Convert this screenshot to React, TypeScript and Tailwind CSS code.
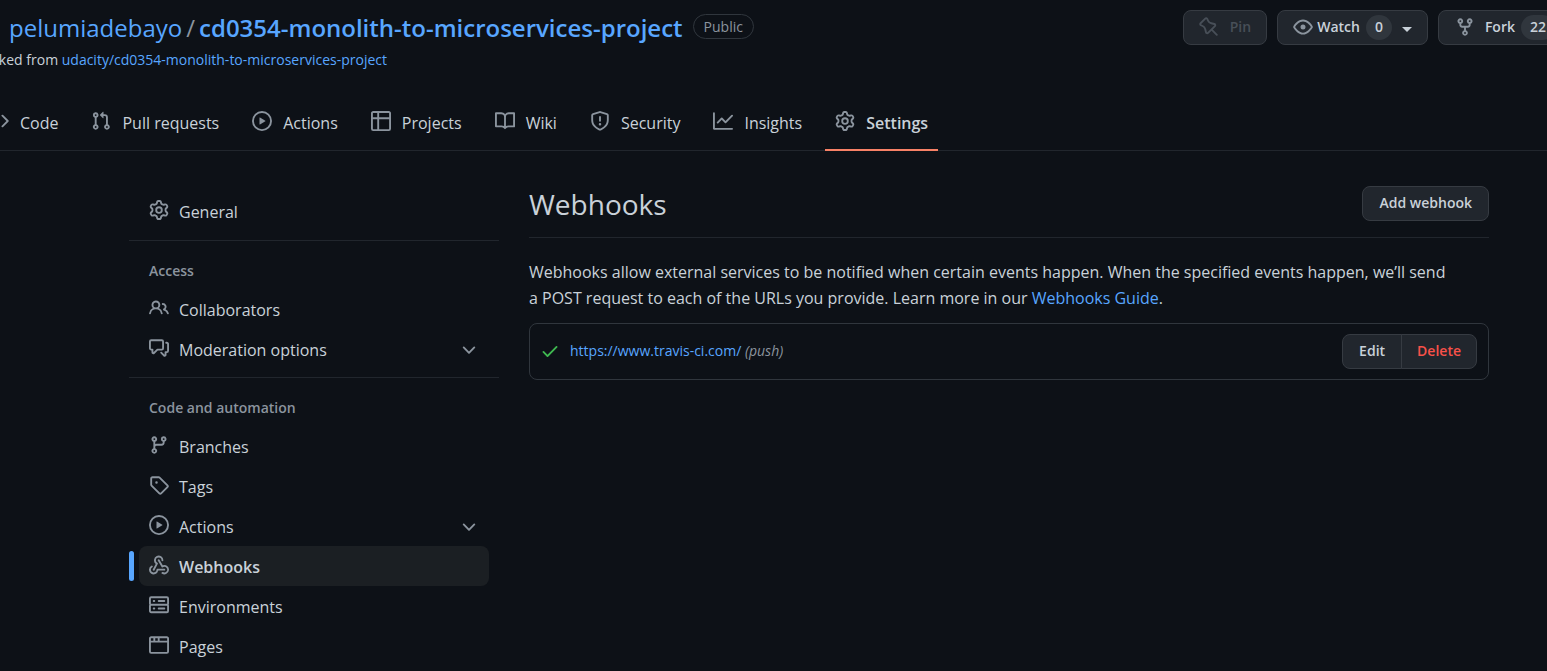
import React from "react";

const icons = {
  code: "M4.72 3.22a.75.75 0 011.06 1.06L2.06 8l3.72 3.72a.75.75 0 11-1.06 1.06L.47 8.53a.75.75 0 010-1.06l4.25-4.25zm6.56 0a.75.75 0 10-1.06 1.06L13.94 8l-3.72 3.72a.75.75 0 101.06 1.06l4.25-4.25a.75.75 0 000-1.06l-4.25-4.25z",
  pullRequest:
    "M7.177 3.073L9.573.677A.25.25 0 0110 .854v4.792a.25.25 0 01-.427.177L7.177 3.427a.25.25 0 010-.354zM3.75 2.5a.75.75 0 100 1.5.75.75 0 000-1.5zm-2.25.75a2.25 2.25 0 113 2.122v5.256a2.251 2.251 0 11-1.5 0V5.372A2.25 2.25 0 011.5 3.25zM11 2.5h-1V4h1a1 1 0 011 1v5.628a2.251 2.251 0 101.5 0V5A2.5 2.5 0 0011 2.5zm1 10.25a.75.75 0 111.5 0 .75.75 0 01-1.5 0zM3.75 12a.75.75 0 100 1.5.75.75 0 000-1.5z",
  play: "M1.5 8a6.5 6.5 0 1113 0 6.5 6.5 0 01-13 0zM8 0a8 8 0 100 16A8 8 0 008 0zM6.379 5.227A.25.25 0 006 5.442v5.117a.25.25 0 00.379.214l4.264-2.559a.25.25 0 000-.428L6.379 5.227z",
  table:
    "M0 1.75C0 .784.784 0 1.75 0h12.5C15.216 0 16 .784 16 1.75v12.5A1.75 1.75 0 0114.25 16H1.75A1.75 1.75 0 010 14.25V1.75zM1.5 6.5v7.75c0 .138.112.25.25.25H5v-8H1.5zM5 5H1.5V1.75a.25.25 0 01.25-.25H5V5zm1.5 1.5v8h7.75a.25.25 0 00.25-.25V6.5h-8zm8-1.5h-8V1.5h7.75a.25.25 0 01.25.25V5z",
  book: "M0 1.75A.75.75 0 01.75 1h4.253c1.227 0 2.317.59 3 1.501A3.744 3.744 0 0111.006 1h4.245a.75.75 0 01.75.75v10.5a.75.75 0 01-.75.75h-4.507a2.25 2.25 0 00-1.591.659l-.622.621a.75.75 0 01-1.06 0l-.622-.621A2.25 2.25 0 005.258 13H.75a.75.75 0 01-.75-.75V1.75zm8.755 3a2.25 2.25 0 012.25-2.25H14.5v9h-3.757c-.71 0-1.4.201-1.992.572l.004-7.322zm-1.504 7.324l.004-5.073-.002-2.253A2.25 2.25 0 005.003 2.5H1.5v9h3.757a3.75 3.75 0 011.994.574z",
  shield:
    "M7.467.133a1.75 1.75 0 011.066 0l5.25 1.68A1.75 1.75 0 0115 3.48V7c0 1.566-.32 3.182-1.303 4.682-.983 1.498-2.585 2.813-5.032 3.855a1.7 1.7 0 01-1.33 0c-2.447-1.042-4.049-2.357-5.032-3.855C1.32 10.182 1 8.566 1 7V3.48a1.75 1.75 0 011.217-1.667l5.25-1.68zm.61 1.429a.25.25 0 00-.153 0l-5.25 1.68a.25.25 0 00-.174.238V7c0 1.358.275 2.666 1.057 3.86.784 1.194 2.121 2.34 4.366 3.297a.2.2 0 00.154 0c2.245-.956 3.582-2.104 4.366-3.298C13.225 9.666 13.5 8.36 13.5 7V3.48a.25.25 0 00-.174-.237l-5.25-1.68zM9 10.5a1 1 0 11-2 0 1 1 0 012 0zm-.25-5.75a.75.75 0 10-1.5 0v3a.75.75 0 001.5 0v-3z",
  graph:
    "M1.5 1.75a.75.75 0 00-1.5 0v12.5c0 .414.336.75.75.75h14.5a.75.75 0 000-1.5H1.5V1.75zm14.28 2.53a.75.75 0 00-1.06-1.06L10 7.94 7.53 5.47a.75.75 0 00-1.06 0L3.22 8.72a.75.75 0 001.06 1.06L7 7.06l2.47 2.47a.75.75 0 001.06 0l5.25-5.25z",
  gear: "M7.429 1.525a6.593 6.593 0 011.142 0c.036.003.108.036.137.146l.289 1.105c.147.56.55.967.997 1.189.174.086.341.183.501.29.417.278.97.423 1.53.27l1.102-.303c.11-.03.175.016.195.046.219.31.41.641.573.989.014.031.022.11-.059.19l-.815.806c-.411.406-.562.957-.53 1.456a4.588 4.588 0 010 .582c-.032.499.119 1.05.53 1.456l.815.806c.08.08.073.159.059.19a6.494 6.494 0 01-.573.99c-.02.029-.086.074-.195.045l-1.103-.303c-.559-.153-1.112-.008-1.529.27-.16.107-.327.204-.5.29-.449.222-.851.628-.998 1.189l-.289 1.105c-.029.11-.101.143-.137.146a6.613 6.613 0 01-1.142 0c-.036-.003-.108-.037-.137-.146l-.289-1.105c-.147-.56-.55-.967-.997-1.189a4.502 4.502 0 01-.501-.29c-.417-.278-.97-.423-1.53-.27l-1.102.303c-.11.03-.175-.016-.195-.046a6.492 6.492 0 01-.573-.989c-.014-.031-.022-.11.059-.19l.815-.806c.411-.406.562-.957.53-1.456a4.587 4.587 0 010-.582c.032-.499-.119-1.05-.53-1.456l-.815-.806c-.08-.08-.073-.159-.059-.19a6.44 6.44 0 01.573-.99c.02-.029.086-.075.195-.045l1.103.303c.559.153 1.112.008 1.529-.27.16-.107.327-.204.5-.29.449-.222.851-.628.998-1.189l.289-1.105c.029-.11.101-.143.137-.146zM8 0c-.236 0-.47.01-.701.03-.743.065-1.29.615-1.458 1.261l-.29 1.106c-.017.066-.078.158-.211.224a5.994 5.994 0 00-.668.386c-.123.082-.233.09-.3.071L3.27 2.776c-.644-.177-1.392.02-1.82.63a7.977 7.977 0 00-.704 1.217c-.315.675-.111 1.422.363 1.891l.815.806c.05.048.098.147.088.294a6.084 6.084 0 000 .772c.01.147-.038.246-.088.294l-.815.806c-.474.469-.678 1.216-.363 1.891.2.428.436.835.704 1.218.428.609 1.176.806 1.82.63l1.103-.303c.066-.019.176-.011.299.071.213.143.436.272.668.386.133.066.194.158.212.224l.289 1.106c.169.646.715 1.196 1.458 1.26a8.094 8.094 0 001.402 0c.743-.064 1.29-.614 1.458-1.26l.29-1.106c.017-.066.078-.158.211-.224a5.98 5.98 0 00.668-.386c.123-.082.233-.09.3-.071l1.102.302c.644.177 1.392-.02 1.82-.63.268-.382.505-.789.704-1.217.315-.675.111-1.422-.364-1.891l-.814-.806c-.05-.048-.098-.147-.088-.294a6.1 6.1 0 000-.772c-.01-.147.039-.246.088-.294l.814-.806c.475-.469.679-1.216.364-1.891a7.992 7.992 0 00-.704-1.218c-.428-.609-1.176-.806-1.82-.63l-1.103.303c-.066.019-.176.011-.299-.071a5.991 5.991 0 00-.668-.386c-.133-.066-.194-.158-.212-.224L10.16 1.29C9.99.645 9.444.095 8.701.031A8.094 8.094 0 008 0zm1.5 8a1.5 1.5 0 11-3 0 1.5 1.5 0 013 0zM11 8a3 3 0 11-6 0 3 3 0 016 0z",
  people:
    "M5.5 3.5a2 2 0 100 4 2 2 0 000-4zM2 5.5a3.5 3.5 0 115.898 2.549 5.507 5.507 0 013.034 4.084.75.75 0 11-1.482.235 4.001 4.001 0 00-7.9 0 .75.75 0 01-1.482-.236A5.507 5.507 0 013.102 8.05 3.49 3.49 0 012 5.5zM11 4a.75.75 0 100 1.5 1.5 1.5 0 01.666 2.844.75.75 0 00-.416.672v.352a.75.75 0 00.574.73c1.2.289 2.162 1.2 2.522 2.372a.75.75 0 101.434-.44 5.01 5.01 0 00-2.56-3.012A3 3 0 0011 4z",
  discussion:
    "M1.5 2.75a.25.25 0 01.25-.25h8.5a.25.25 0 01.25.25v5.5a.25.25 0 01-.25.25h-3.5a.75.75 0 00-.53.22L3.5 11.44V9.25a.75.75 0 00-.75-.75h-1a.25.25 0 01-.25-.25v-5.5zM1.75 1A1.75 1.75 0 000 2.75v5.5C0 9.216.784 10 1.75 10H2v1.543a1.457 1.457 0 002.487 1.03L7.061 10h3.189A1.75 1.75 0 0012 8.25v-5.5A1.75 1.75 0 0010.25 1h-8.5zM14.5 4.75a.25.25 0 00-.25-.25h-.5a.75.75 0 110-1.5h.5c.966 0 1.75.784 1.75 1.75v5.5A1.75 1.75 0 0114.25 12H14v1.543a1.457 1.457 0 01-2.487 1.03L9.22 12.28a.75.75 0 111.06-1.06l2.22 2.22v-2.19a.75.75 0 01.75-.75h1a.25.25 0 00.25-.25v-5.5z",
  branch:
    "M11.75 2.5a.75.75 0 100 1.5.75.75 0 000-1.5zm-2.25.75a2.25 2.25 0 113 2.122V6A2.5 2.5 0 0110 8.5H6a1 1 0 00-1 1v1.128a2.251 2.251 0 11-1.5 0V5.372a2.25 2.25 0 111.5 0v1.836A2.492 2.492 0 016 7h4a1 1 0 001-1v-.628A2.25 2.25 0 019.5 3.25zM4.25 12a.75.75 0 100 1.5.75.75 0 000-1.5zM3.5 3.25a.75.75 0 111.5 0 .75.75 0 01-1.5 0z",
  tag: "M2.5 7.775V2.75a.25.25 0 01.25-.25h5.025a.25.25 0 01.177.073l6.25 6.25a.25.25 0 010 .354l-5.025 5.025a.25.25 0 01-.354 0l-6.25-6.25a.25.25 0 01-.073-.177zm-1.5 0V2.75C1 1.784 1.784 1 2.75 1h5.025c.464 0 .91.184 1.238.513l6.25 6.25a1.75 1.75 0 010 2.474l-5.026 5.026a1.75 1.75 0 01-2.474 0l-6.25-6.25A1.75 1.75 0 011 7.775zM6 5a1 1 0 100 2 1 1 0 000-2z",
  webhook:
    "M5.5 4.25a2.25 2.25 0 014.5 0 .75.75 0 001.5 0 3.75 3.75 0 10-6.14 2.889l-2.272 4.258a.75.75 0 001.324.706L7 7.25a.75.75 0 00-.309-1.015A2.25 2.25 0 015.5 4.25zM7.364 3.607a.75.75 0 011.03.257l2.608 4.349a3.75 3.75 0 11-.628 6.785.75.75 0 01.752-1.299 2.25 2.25 0 10-.033-3.88.75.75 0 01-1.03-.256L7.107 4.636a.75.75 0 01.257-1.03zM2.9 8.776A.75.75 0 012.625 9.8 2.25 2.25 0 106 11.75a.75.75 0 01.75-.751h5.5a.75.75 0 010 1.5H7.425a3.751 3.751 0 11-5.55-3.998.75.75 0 011.024.274z",
  server:
    "M1.75 1A1.75 1.75 0 000 2.75v4c0 .372.116.717.314 1a1.742 1.742 0 00-.314 1v4c0 .966.784 1.75 1.75 1.75h12.5A1.75 1.75 0 0016 12.75v-4c0-.372-.116-.717-.314-1 .198-.283.314-.628.314-1v-4A1.75 1.75 0 0014.25 1H1.75zm0 7.5a.25.25 0 00-.25.25v4c0 .138.112.25.25.25h12.5a.25.25 0 00.25-.25v-4a.25.25 0 00-.25-.25H1.75zM1.5 2.75a.25.25 0 01.25-.25h12.5a.25.25 0 01.25.25v4a.25.25 0 01-.25.25H1.75a.25.25 0 01-.25-.25v-4zm5.5 2A.75.75 0 017.75 4h4.5a.75.75 0 010 1.5h-4.5A.75.75 0 017 4.75zM7.75 10a.75.75 0 000 1.5h4.5a.75.75 0 000-1.5h-4.5zM3 4.75A.75.75 0 013.75 4h.5a.75.75 0 010 1.5h-.5A.75.75 0 013 4.75zM3.75 10a.75.75 0 000 1.5h.5a.75.75 0 000-1.5h-.5z",
  browser:
    "M0 2.75C0 1.784.784 1 1.75 1h12.5c.966 0 1.75.784 1.75 1.75v10.5A1.75 1.75 0 0114.25 15H1.75A1.75 1.75 0 010 13.25V2.75zm1.75-.25a.25.25 0 00-.25.25V4.5h2v-2H1.75zM5 2.5v2h2v-2H5zm3.5 0v2h6V2.75a.25.25 0 00-.25-.25H8.5zm6 3.5h-13v7.25c0 .138.112.25.25.25h12.5a.25.25 0 00.25-.25V6z",
  pin: "M4.456.734a1.75 1.75 0 012.826.504l.613 1.327a3.081 3.081 0 002.084 1.707l2.454.584c1.332.317 1.8 1.972.832 2.94L11.06 10l3.72 3.72a.75.75 0 11-1.061 1.06L10 11.06l-2.204 2.205c-.968.968-2.623.5-2.94-.832l-.584-2.454a3.081 3.081 0 00-1.707-2.084l-1.327-.613a1.75 1.75 0 01-.504-2.826L4.456.734zM5.92 1.866a.25.25 0 00-.404-.072L1.794 5.516a.25.25 0 00.072.404l1.328.613A4.582 4.582 0 015.73 9.63l.584 2.454a.25.25 0 00.42.12l5.47-5.47a.25.25 0 00-.12-.42L9.63 5.73a4.581 4.581 0 01-3.098-2.537L5.92 1.866z",
  eye: "M1.679 7.932c.412-.621 1.242-1.75 2.366-2.717C5.175 4.242 6.527 3.5 8 3.5c1.473 0 2.824.742 3.955 1.715 1.124.967 1.954 2.096 2.366 2.717a.119.119 0 010 .136c-.412.621-1.242 1.75-2.366 2.717C10.825 11.758 9.473 12.5 8 12.5c-1.473 0-2.824-.742-3.955-1.715C2.92 9.818 2.09 8.69 1.679 8.068a.119.119 0 010-.136zM8 2c-1.981 0-3.67.992-4.933 2.078C1.797 5.169.88 6.423.43 7.1a1.619 1.619 0 000 1.798c.45.678 1.367 1.932 2.637 3.024C4.329 13.008 6.019 14 8 14c1.981 0 3.67-.992 4.933-2.078 1.27-1.091 2.187-2.345 2.637-3.023a1.619 1.619 0 000-1.798c-.45-.678-1.367-1.932-2.637-3.023C11.671 2.992 9.981 2 8 2zm0 8a2 2 0 100-4 2 2 0 000 4z",
  fork: "M5 3.25a.75.75 0 11-1.5 0 .75.75 0 011.5 0zm0 2.122a2.25 2.25 0 10-1.5 0v.878A2.25 2.25 0 005.75 8.5h1.5v2.128a2.251 2.251 0 101.5 0V8.5h1.5a2.25 2.25 0 002.25-2.25v-.878a2.25 2.25 0 10-1.5 0v.878a.75.75 0 01-.75.75h-4.5A.75.75 0 015 6.25v-.878zm3.75 7.378a.75.75 0 11-1.5 0 .75.75 0 011.5 0zm3-8.75a.75.75 0 100-1.5.75.75 0 000 1.5z",
  check: "M13.78 4.22a.75.75 0 010 1.06l-7.25 7.25a.75.75 0 01-1.06 0L2.22 9.28a.75.75 0 011.06-1.06L6 10.94l6.72-6.72a.75.75 0 011.06 0z",
  chevron:
    "M12.78 6.22a.75.75 0 010 1.06l-4.25 4.25a.75.75 0 01-1.06 0L3.22 7.28a.75.75 0 011.06-1.06L8 9.94l3.72-3.72a.75.75 0 011.06 0z",
};

type IconName = keyof typeof icons;

function Icon({ name, className = "size-5" }: { name: IconName; className?: string }) {
  return (
    <svg viewBox="0 0 16 16" fill="currentColor" fillRule="evenodd" aria-hidden="true" className={`shrink-0 ${className}`}>
      {name === "webhook" ? (
        icons.webhook.split(/(?<=z)/).map((d) => <path key={d} d={d} />)
      ) : (
        <path d={icons[name]} />
      )}
    </svg>
  );
}

const tabs: { icon: IconName; label: string; active?: boolean }[] = [
  { icon: "code", label: "Code" },
  { icon: "pullRequest", label: "Pull requests" },
  { icon: "play", label: "Actions" },
  { icon: "table", label: "Projects" },
  { icon: "book", label: "Wiki" },
  { icon: "shield", label: "Security" },
  { icon: "graph", label: "Insights" },
  { icon: "gear", label: "Settings", active: true },
];

type Item = { icon: IconName; label: string; active?: boolean; expandable?: boolean };

const groups: { title?: string; items: Item[] }[] = [
  { items: [{ icon: "gear", label: "General" }] },
  {
    title: "Access",
    items: [
      { icon: "people", label: "Collaborators" },
      { icon: "discussion", label: "Moderation options", expandable: true },
    ],
  },
  {
    title: "Code and automation",
    items: [
      { icon: "branch", label: "Branches" },
      { icon: "tag", label: "Tags" },
      { icon: "play", label: "Actions", expandable: true },
      { icon: "webhook", label: "Webhooks", active: true },
      { icon: "server", label: "Environments" },
      { icon: "browser", label: "Pages" },
    ],
  },
];

const buttonBase = "flex h-[35px] items-center border border-[#363b42] bg-[#21262d] pb-px text-[14px] font-semibold";

function SidebarItem({ item }: { item: Item }) {
  const inner = (
    <>
      <span className="pb-1 text-[#8b949e]">
        <Icon name={item.icon} />
      </span>
      <span className="flex-1 text-left">{item.label}</span>
      {item.expandable && (
        <span className="pb-[3px] text-[#8b949e]">
          <Icon name="chevron" />
        </span>
      )}
    </>
  );
  const rowClass = "flex h-10 w-full items-center gap-[10px] rounded-lg px-[10px] pt-[2px]";
  return (
    <li className="relative px-[10px]">
      {item.active && <span className="absolute top-[5px] left-0 h-[30px] w-[5px] rounded-full bg-[#58a6ff]" />}
      {item.expandable ? (
        <button type="button" aria-expanded="false" className={rowClass}>
          {inner}
        </button>
      ) : (
        <a href="#" className={item.active ? `${rowClass} bg-[#1b1f23] font-semibold` : rowClass}>
          {inner}
        </a>
      )}
    </li>
  );
}

export default function App() {
  return (
    <div className="min-h-screen overflow-hidden bg-[#0d1117] font-['Open_Sans','Noto_Sans',sans-serif] text-[16px] leading-[26px] text-[#c9d1d9]">
      <header className="border-b border-[#21262d]">
        <div className="flex items-start justify-between">
          <div className="pl-[9px]">
            <div className="flex items-center pt-[10px] whitespace-nowrap">
              <h1 className="flex gap-1 text-[24px] leading-9 text-[#58a6ff]">
                <a href="#">pelumiadebayo</a>
                <span className="text-[#8b949e]">/</span>
                <a href="#" className="font-semibold">cd0354-monolith-to-microservices-project</a>
              </h1>
              <span className="mb-1 ml-[10px] rounded-full border border-[#30363d] px-[10px] text-[14px] leading-[23px] font-medium text-[#8b949e]">
                Public
              </span>
            </div>
            <p className="-ml-[29px] pt-px text-[14px] whitespace-nowrap">
              forked from{" "}
              <a href="#" className="text-[#58a6ff]">
                udacity/cd0354-monolith-to-microservices-project
              </a>
            </p>
          </div>
          <div className="-mr-[25px] flex shrink-0 gap-[10px] pt-[10px]">
            <button type="button" disabled className={`${buttonBase} gap-[11px] rounded-lg px-[15px] font-medium text-[#484f58]`}>
              <Icon name="pin" />
              Pin
            </button>
            <button type="button" className={`${buttonBase} rounded-lg px-[15px]`}>
              <Icon name="eye" className="mr-1 size-5 text-[#8b949e]" />
              Watch
              <span className="ml-[6px] min-w-[26px] rounded-full bg-[#30363d] px-2 pb-[2px] text-center leading-[23px]">0</span>
              <svg viewBox="0 0 10 5" fill="currentColor" aria-hidden="true" className="mt-1 ml-[10px] h-[5px] w-[10px]">
                <path d="M0 0h10L5 5z" />
              </svg>
            </button>
            <button type="button" className={`${buttonBase} rounded-lg px-[16px]`}>
              <Icon name="fork" className="mr-[10px] size-5 text-[#8b949e]" />
              Fork
              <span className="ml-[6px] rounded-full bg-[#30363d] px-[9px] pb-[2px] leading-[23px]">22</span>
            </button>
          </div>
        </div>
        <nav aria-label="Repository" className="-ml-[21px] flex pt-[21px] whitespace-nowrap">
          {tabs.map((tab) => (
            <a
              key={tab.label}
              href="#"
              className={
                tab.active
                  ? "-mb-px flex h-[57px] items-center gap-[11px] border-b-2 border-[#f78166] px-[10px] pt-[3px] font-semibold"
                  : "mr-[13px] flex h-14 items-center gap-[11px] px-[10px] pt-[2px]"
              }
            >
              <span className="pb-1 text-[#8b949e]">
                <Icon name={tab.icon} />
              </span>
              {tab.label}
            </a>
          ))}
        </nav>
      </header>

      <div className="flex gap-[30px] pt-[35px] pr-[58px] pl-[129px]">
        <nav aria-label="Settings" className="w-[370px] shrink-0">
          {groups.map((group, index) => (
            <section key={group.title ?? "general"} className={index > 0 ? "mt-2 border-t border-[#21262d] pt-[17px]" : "pt-[5px] pb-px"}>
              {group.title && <h2 className="mb-[5px] px-5 text-[14px] font-semibold text-[#8b949e]">{group.title}</h2>}
              <ul>
                {group.items.map((item) => (
                  <SidebarItem key={item.label} item={item} />
                ))}
              </ul>
            </section>
          ))}
        </nav>

        <main className="min-w-0 flex-1">
          <div className="flex items-start justify-between border-b border-[#21262d] pb-[15px]">
            <h2 className="text-[28px] leading-9">Webhooks</h2>
            <button type="button" className={`${buttonBase} rounded-lg px-[16px]`}>
              Add webhook
            </button>
          </div>
          <p className="pt-[21px] pr-9">
            Webhooks allow external services to be notified when certain events happen. When the specified events happen, we’ll send
            a POST request to each of the URLs you provide. Learn more in our{" "}
            <a href="#" className="text-[#58a6ff]">
              Webhooks Guide
            </a>
            .
          </p>
          <ul className="mt-3 rounded-lg border border-[#30363d]">
            <li className="flex items-center py-[10px] pr-[11px] pl-[10px]">
              <Icon name="check" className="mr-[10px] mb-[2px] size-5 text-[#3fb950]" />
              <p className="flex-1 pb-[2px] text-[14px]">
                <a href="#" className="text-[#58a6ff]">
                  https://www.travis-ci.com/
                </a>{" "}
                <em className="text-[#8b949e]">(push)</em>
              </p>
              <button type="button" className={`${buttonBase} rounded-l-lg px-[16px]`}>
                Edit
              </button>
              <button type="button" className={`${buttonBase} -ml-px rounded-r-lg px-[15px] text-[#f85149]`}>
                Delete
              </button>
            </li>
          </ul>
        </main>
      </div>
    </div>
  );
}
